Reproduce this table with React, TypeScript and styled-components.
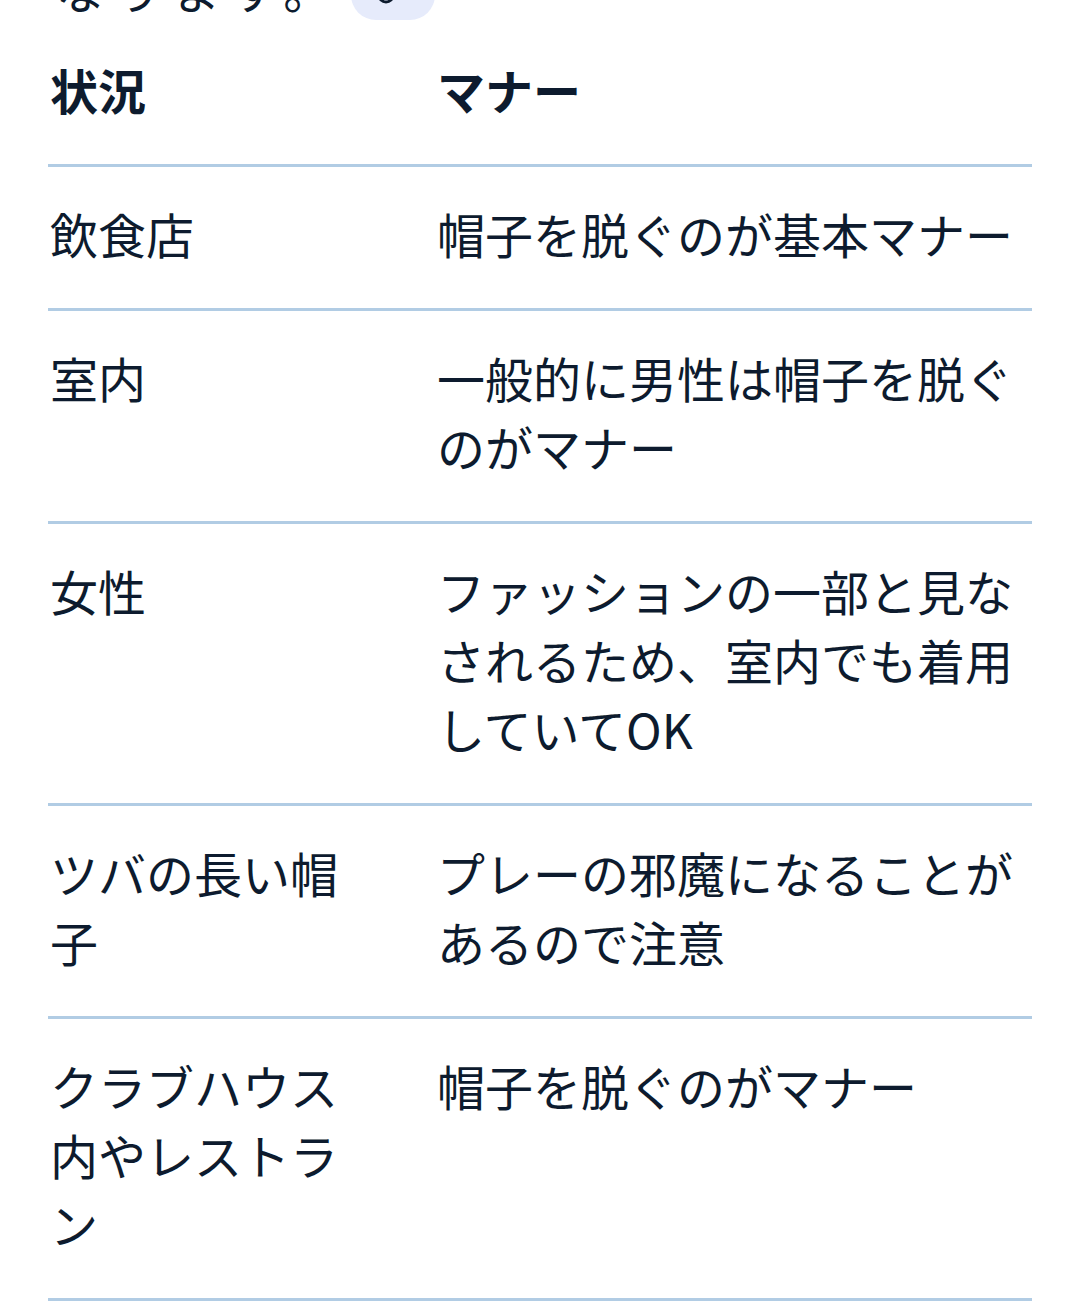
import styled, { createGlobalStyle } from 'styled-components';

const GlobalStyle = createGlobalStyle`
  html, body {
    margin: 0;
    padding: 0;
    background: #ffffff;
  }
  body {
    font-family: "Noto Sans CJK JP", "Noto Sans", sans-serif;
    color: #0d1b2e;
    overflow: hidden;
  }
`;

const Page = styled.div`
  padding: 0 48px;
`;

const Lead = styled.p`
  margin: -46px 0 0;
  padding-left: 8px;
  font-size: 48px;
  line-height: 69px;
  letter-spacing: 10px;
  white-space: nowrap;
`;

const SourceChip = styled.span`
  display: inline-flex;
  align-items: center;
  justify-content: center;
  width: 84px;
  height: 50px;
  margin-left: 10px;
  margin-bottom: 3px;
  vertical-align: bottom;
  border-radius: 25px;
  background: #e6ebfb;

  svg {
    width: 20px;
    height: 20px;
    margin-left: -14px;
  }
`;

const Table = styled.div`
  display: flex;
  flex-direction: column;
`;

const Row = styled.div`
  display: grid;
  grid-template-columns: 387px 1fr;
  border-bottom: 3px solid #b1cce4;
`;

const Cell = styled.div<{ $head?: boolean; $first?: boolean }>`
  padding: 32px 2px 40px;
  padding-right: ${(p) => (p.$first ? '65px' : '2px')};
  font-size: 48px;
  line-height: 69px;
  font-weight: ${(p) => (p.$head ? 700 : 400)};
  color: #0d1b2e;
  word-break: break-all;
`;

const rows = [
  ['飲食店', '帽子を脱ぐのが基本マナー'],
  ['室内', '一般的に男性は帽子を脱ぐのがマナー'],
  ['女性', 'ファッションの一部と見なされるため、室内でも着用していてOK'],
  ['ツバの長い帽子', 'プレーの邪魔になることがあるので注意'],
  ['クラブハウス内やレストラン', '帽子を脱ぐのがマナー'],
];

export default function App() {
  return (
    <Page>
      <GlobalStyle />
      <Lead>
        なります。
        <SourceChip>
          <svg viewBox="0 0 20 20" fill="none" stroke="#0d1b2e" strokeWidth="3">
            <circle cx="10" cy="10" r="7" />
          </svg>
        </SourceChip>
      </Lead>
      <Table>
        <Row>
          <Cell $head $first>状況</Cell>
          <Cell $head>マナー</Cell>
        </Row>
        {rows.map(function (row, index) {
          return (
            <Row key={index}>
              <Cell $first>{row[0]}</Cell>
              <Cell>{row[1]}</Cell>
            </Row>
          );
        })}
      </Table>
    </Page>
  );
}
